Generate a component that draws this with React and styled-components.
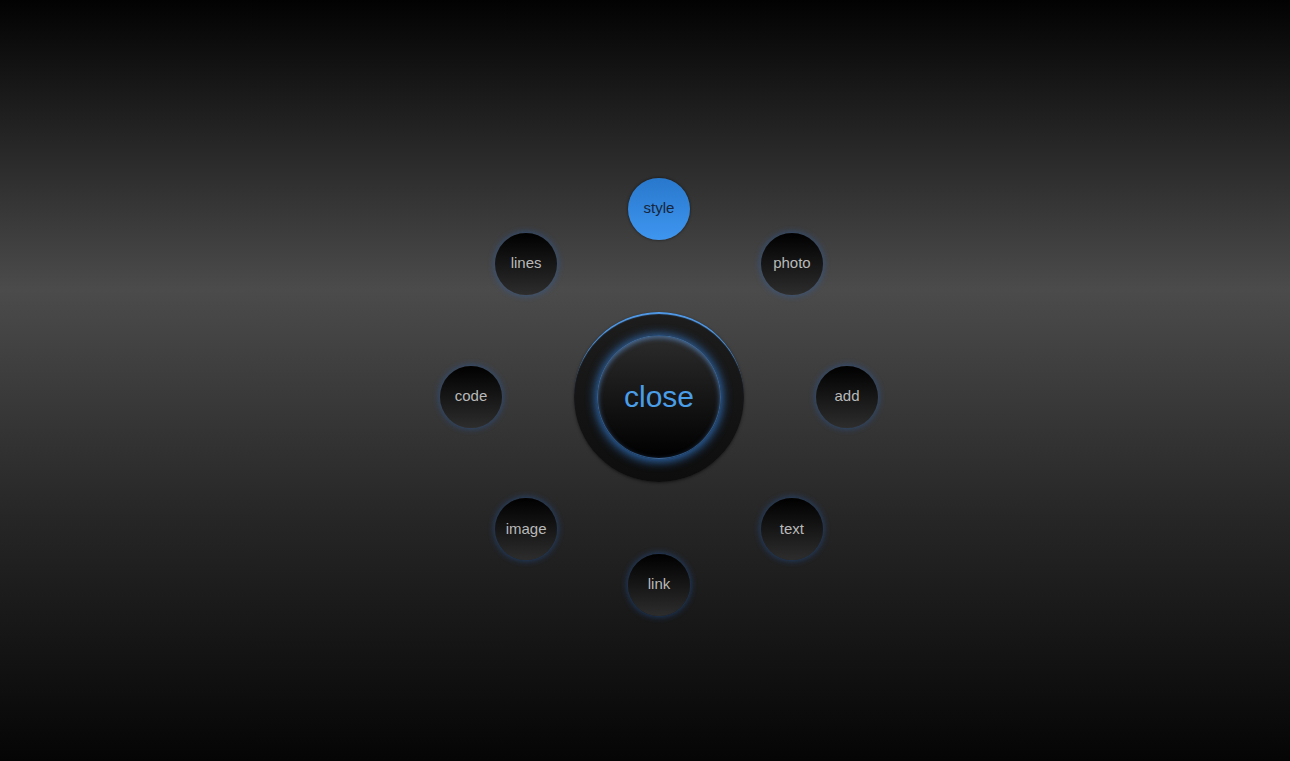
import React from "react";
import styled, { createGlobalStyle } from "styled-components";

const Global = createGlobalStyle`
  html, body { margin: 0; padding: 0; height: 100%; }
  body {
    font-family: "Liberation Sans", Arial, sans-serif;
    background: linear-gradient(#020202 0%, #4b4b4b 38%, #262626 68%, #050505 100%);
    overflow: hidden;
  }
`;

const Stage = styled.div`
  width: 100vw;
  height: 100vh;
  display: flex;
  align-items: center;
  justify-content: center;
`;

const Menu = styled.div`
  position: relative;
  width: 440px;
  height: 440px;
  margin: 32px 0 0 28px;
  display: grid;
  place-items: center;
`;

const Hub = styled.div`
  width: 170px;
  height: 170px;
  border-radius: 50%;
  background: linear-gradient(#1d1d1d, #0d0d0d);
  box-shadow: inset 0 3px 1px -1px rgba(86, 165, 250, 0.95), 0 1px 3px rgba(0, 0, 0, 0.5);
  display: grid;
  place-items: center;
`;

const CloseButton = styled.button`
  width: 124px;
  height: 124px;
  border-radius: 50%;
  border: 1px solid rgba(80, 155, 240, 0.55);
  background: linear-gradient(#2c2c2c, #000);
  box-shadow: 0 1px 10px 2px rgba(55, 135, 230, 0.7), inset 0 2px 5px rgba(110, 175, 255, 0.5);
  color: #4a9ee8;
  font-family: "Liberation Sans", Arial, sans-serif;
  font-size: 30px;
  padding: 0;
  cursor: pointer;
`;

const Item = styled.button`
  position: absolute;
  width: 62px;
  height: 62px;
  margin: -31px 0 0 -31px;
  border-radius: 50%;
  border: none;
  padding: 0 0 2px;
  font-family: "Liberation Sans", Arial, sans-serif;
  font-size: 15px;
  cursor: pointer;
  color: ${(p) => (p.$active ? "#17253b" : "#b9b9b9")};
  background: ${(p) =>
    p.$active ? "linear-gradient(#2878cc, #3f96f0)" : "linear-gradient(#000, #2d2d2d)"};
  box-shadow: ${(p) =>
    p.$active
      ? "0 0 3px rgba(0, 0, 0, 0.6)"
      : "0 0 6px 1px rgba(35, 100, 190, 0.45)"};
`;

const items = ["style", "photo", "add", "text", "link", "image", "code", "lines"];
const R = 188;

export default function App() {
  return (
    <>
      <Global />
      <Stage>
        <Menu>
          <Hub>
            <CloseButton>close</CloseButton>
          </Hub>
          {items.map((label, i) => {
            const a = (i * Math.PI) / 4;
            const x = 220 + R * Math.sin(a);
            const y = 220 - R * Math.cos(a);
            return (
              <Item key={label} $active={label === "style"} style={{ left: x, top: y }}>
                {label}
              </Item>
            );
          })}
        </Menu>
      </Stage>
    </>
  );
}
